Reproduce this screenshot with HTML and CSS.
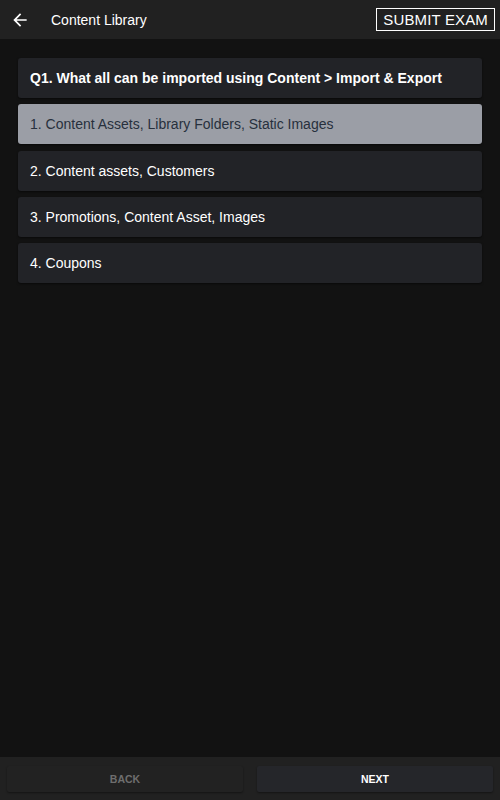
FILE: index.html
```html
<!DOCTYPE html>
<html lang="en">
<head>
<meta charset="utf-8">
<title>Content Library</title>
<link rel="stylesheet" href="styles.css">
</head>
<body>
<div class="app">
  <header class="topbar">
    <button class="back-btn" aria-label="Back">
      <svg width="20" height="20" viewBox="0 0 24 24"><path d="M20 11H7.83l5.59-5.59L12 4l-8 8 8 8 1.41-1.41L7.83 13H20v-2z" fill="#fff"/></svg>
    </button>
    <div class="title">Content Library</div>
    <button class="submit">SUBMIT EXAM</button>
  </header>
  <main class="content">
    <div class="card question">Q1. What all can be imported using Content &gt; Import &amp; Export</div>
    <div class="card option selected">1. Content Assets, Library Folders, Static Images</div>
    <div class="card option">2. Content assets, Customers</div>
    <div class="card option">3. Promotions, Content Asset, Images</div>
    <div class="card option">4. Coupons</div>
  </main>
  <footer class="footer">
    <button class="nav-btn disabled">BACK</button>
    <button class="nav-btn">NEXT</button>
  </footer>
</div>
</body>
</html>
```
FILE: styles.css
```css
* { box-sizing: border-box; }
html, body { margin: 0; padding: 0; height: 100%; }
body {
  background: #121212;
  font-family: "Liberation Sans", Arial, sans-serif;
  color: #fff;
}
.app {
  display: flex;
  flex-direction: column;
  height: 800px;
}
.topbar {
  height: 39px;
  background: #212121;
  display: flex;
  align-items: center;
  padding: 0 5px 0 10px;
  flex-shrink: 0;
}
.back-btn {
  background: none;
  border: 0;
  padding: 0;
  width: 20px;
  height: 20px;
  display: flex;
  align-items: center;
  justify-content: center;
  margin-top: 0;
}
.title {
  font-size: 14px;
  margin-left: 21px;
  flex: 1;
}
.submit {
  background: transparent;
  color: #fff;
  border: 1.5px solid #fff;
  font-family: "Liberation Sans", Arial, sans-serif;
  font-size: 15px;
  letter-spacing: 0.15px;
  height: 23px;
  padding: 0 6px;
  line-height: 20px;
  margin-right: 0;
}
.content {
  flex: 1;
  padding: 19px 18px 0;
  display: flex;
  flex-direction: column;
  gap: 6.3px;
}
.card {
  height: 40px;
  display: flex;
  align-items: center;
  padding: 0 12px;
  background: #222327;
  border-radius: 3px;
  font-size: 14px;
  box-shadow: 0 1px 2px rgba(0,0,0,0.5);
}
.question { font-weight: bold; }
.option.selected {
  background: #9b9ea6;
  color: #27303d;
}
.footer {
  height: 43px;
  background: #212121;
  display: flex;
  gap: 14px;
  padding: 9px 7px 8px;
  flex-shrink: 0;
}
.nav-btn {
  flex: 1;
  border: 0;
  border-radius: 2px;
  background: #25262a;
  color: #fff;
  font-family: "Liberation Sans", Arial, sans-serif;
  font-weight: bold;
  font-size: 10.5px;
  box-shadow: 0 1px 2px rgba(0,0,0,0.4);
}
.nav-btn.disabled {
  background: #222222;
  color: #6e6e6e;
}
```
